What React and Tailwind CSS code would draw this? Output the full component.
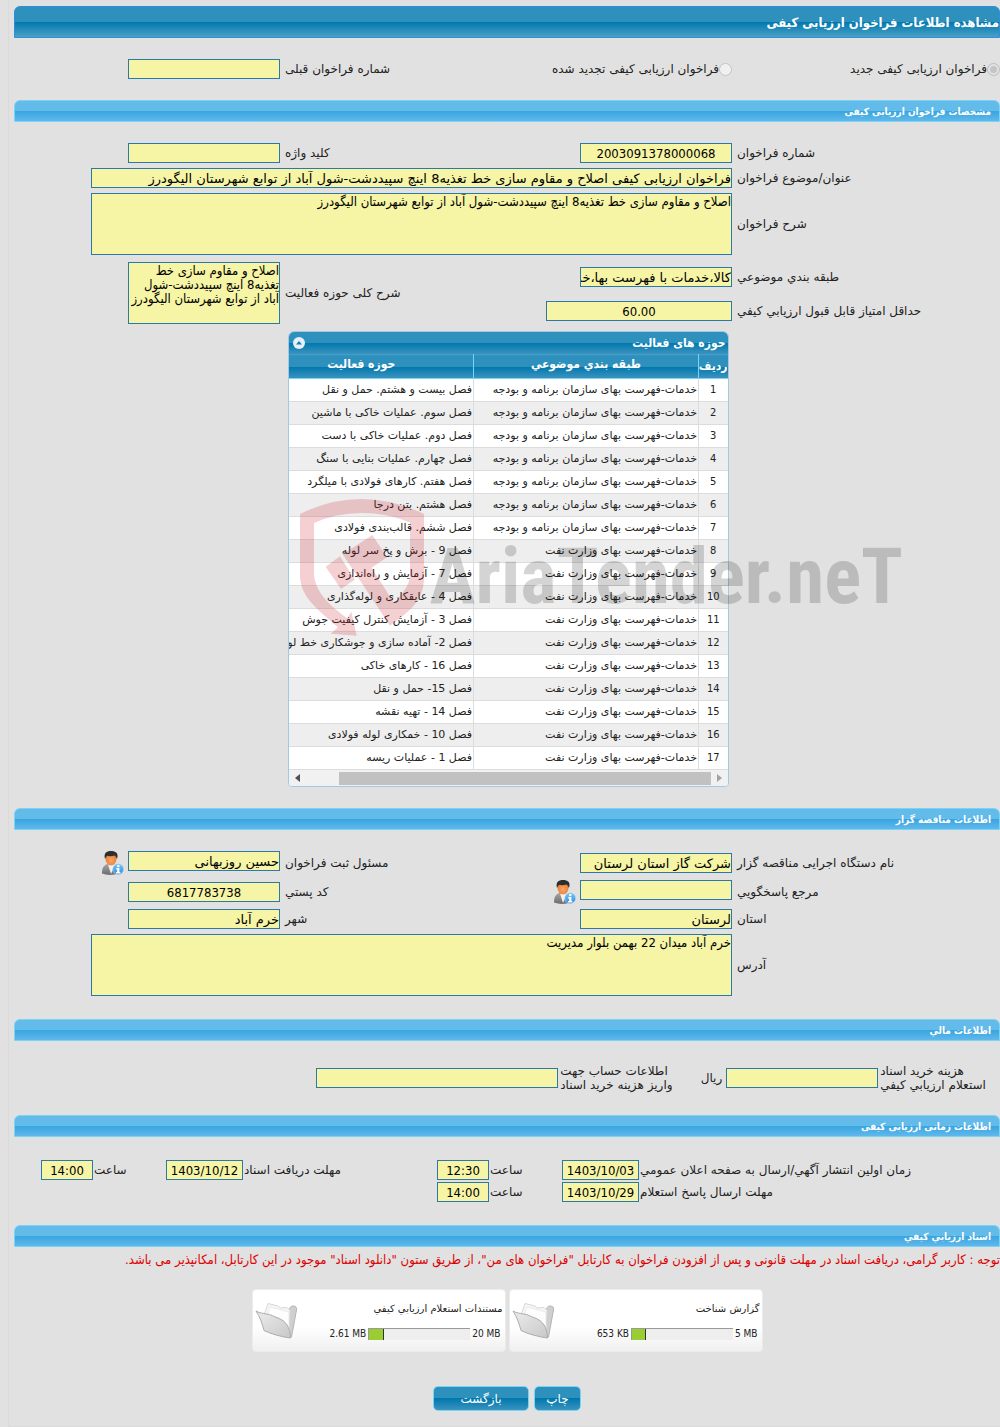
import clsx from 'clsx'

const activities = [
  ['خدمات-فهرست بهای سازمان برنامه و بودجه', 'فصل بیست و هشتم. حمل و نقل'],
  ['خدمات-فهرست بهای سازمان برنامه و بودجه', 'فصل سوم. عملیات خاکی با ماشین'],
  ['خدمات-فهرست بهای سازمان برنامه و بودجه', 'فصل دوم. عملیات خاکی با دست'],
  ['خدمات-فهرست بهای سازمان برنامه و بودجه', 'فصل چهارم. عملیات بنایی با سنگ'],
  ['خدمات-فهرست بهای سازمان برنامه و بودجه', 'فصل هفتم. کارهای فولادی با میلگرد'],
  ['خدمات-فهرست بهای سازمان برنامه و بودجه', 'فصل هشتم. بتن درجا'],
  ['خدمات-فهرست بهای سازمان برنامه و بودجه', 'فصل ششم. قالب‌بندی فولادی'],
  ['خدمات-فهرست بهای وزارت نفت', 'فصل 9 - برش و پخ سر لوله'],
  ['خدمات-فهرست بهای وزارت نفت', 'فصل 7 - آزمایش و راه‌اندازی'],
  ['خدمات-فهرست بهای وزارت نفت', 'فصل 4 - عایقکاری و لوله‌گذاری'],
  ['خدمات-فهرست بهای وزارت نفت', 'فصل 3 - آزمایش کنترل کیفیت جوش'],
  ['خدمات-فهرست بهای وزارت نفت', 'فصل 2- آماده سازی و جوشکاری خط لوله'],
  ['خدمات-فهرست بهای وزارت نفت', 'فصل 16 - کارهای خاکی'],
  ['خدمات-فهرست بهای وزارت نفت', 'فصل 15- حمل و نقل'],
  ['خدمات-فهرست بهای وزارت نفت', 'فصل 14 - تهیه نقشه'],
  ['خدمات-فهرست بهای وزارت نفت', 'فصل 10 - خمکاری لوله فولادی'],
  ['خدمات-فهرست بهای وزارت نفت', 'فصل 1 - عملیات ریسه'],
]

const documents = [
  { title: 'گزارش شناخت', limit: '5 MB', used: '653 KB', percent: 14 },
  { title: 'مستندات استعلام ارزیابي کیفي', limit: '20 MB', used: '2.61 MB', percent: 15 },
]

function SectionBar({ children }) {
  return (
    <h2 className="h-[22px] rounded-t-md border border-[#78d3f6] bg-[linear-gradient(#63bbea_50%,#38a5e1_50%,#60b8ea)] px-2 text-[10px] leading-[22px] font-bold text-white font-['DejaVu_Sans_Condensed']">
      {children}
    </h2>
  )
}

function Field({ id, value = '', numeric, width = 'w-[152px]' }) {
  return (
    <input
      id={id}
      readOnly
      value={value}
      className={clsx(
        'h-5 max-w-full shrink-0 border border-[#2c79a8] bg-[#f6f4a5] text-[13px] leading-[18px] text-black outline-none',
        width,
        numeric ? "text-center font-['DejaVu_Sans_Condensed']" : 'text-right'
      )}
    />
  )
}

function Area({ id, value, width }) {
  return (
    <textarea
      id={id}
      readOnly
      value={value}
      className={clsx("block h-[62px] max-w-full resize-none overflow-hidden border border-[#2c79a8] bg-[#f6f4a5] py-px text-[13px] leading-[14px] text-black outline-none font-['DejaVu_Sans_Condensed']", width)}
    />
  )
}

// label sits against the field, so its text is pushed to the left edge of the cell
function LabelCell({ id, tight, children }) {
  return (
    <div className="flex items-center">
      <label htmlFor={id} className={clsx('w-full text-[12px] leading-[14px]', tight ? 'pl-px' : 'pl-[5px]')} dir="ltr">
        <bdi dir="rtl">{children}</bdi>
      </label>
    </div>
  )
}

function PersonIcon() {
  return (
    <svg width="24" height="24" viewBox="0 0 24 24">
      <defs>
        <linearGradient id="suit" x1="0" y1="0" x2="0" y2="1">
          <stop offset="0" stopColor="#a5a5a5" />
          <stop offset="1" stopColor="#6c6c6c" />
        </linearGradient>
        <radialGradient id="face" cx="0.5" cy="0.6" r="0.6">
          <stop offset="0" stopColor="#ffa463" />
          <stop offset="1" stopColor="#e07a30" />
        </radialGradient>
        <linearGradient id="info" x1="0" y1="0" x2="0" y2="1">
          <stop offset="0" stopColor="#7cc4f6" />
          <stop offset="1" stopColor="#2f8fdf" />
        </linearGradient>
      </defs>
      <path d="M2 22.500c0-5 1-7.500 5-9.500h6c4 1.500 6 4 6 9-5 2.500-12 2.500-17 .5z" fill="url(#suit)" />
      <path d="M8 13.500 11 23l4-9.500z" fill="#f2f2f2" />
      <ellipse cx="11" cy="8" rx="5.500" ry="6.500" fill="url(#face)" />
      <path d="M5 8C3.500 2 6.500 0 11 0s8 2 6 8c-.8-2-1.500-3-2.500-3.500-2.500.8-5.500.8-7 .3C6.300 5.500 5.800 6.500 5 8z" fill="#2e2e2e" />
      <circle cx="18.200" cy="18.200" r="5.500" fill="url(#info)" stroke="#bfe0f8" strokeWidth=".6" />
      <rect x="17.200" y="14" width="2.200" height="2.200" fill="#fff" />
      <path d="M16.300 17h3.100v4h1v1.400h-4.300v-1.400h1.100v-2.600h-.9z" fill="#fff" />
    </svg>
  )
}

function FolderIcon() {
  return (
    <svg width="44" height="40" viewBox="0 0 44 40">
      <defs>
        <linearGradient id="flap" x1="0" y1="0" x2="1" y2="1">
          <stop offset="0" stopColor="#ececec" />
          <stop offset="1" stopColor="#c8c8c8" />
        </linearGradient>
      </defs>
      <path d="M31 12c4-2 3-7 7-7 3 0 4 1.500 3.500 4L36.500 36l-4-3z" fill="#cfcfcf" stroke="#b5b5b5" />
      <path d="M9 14 13 2.500 23 5l2 2 7-.5 3 3-1 22-24-9z" fill="#f6f6f6" stroke="#d8d8d8" />
      <path d="M12 14 15 6l19 5v20z" fill="#fdfdfd" stroke="#e0e0e0" strokeWidth=".6" />
      <path d="M1 10c4 2.500 7 2 10 3 5 0 8 3 12 4 8 3 12 9 12.500 20C27 36 16 33 9 29.500 7 22 5 16 1 10z" fill="url(#flap)" stroke="#acacac" />
    </svg>
  )
}

function Watermark() {
  return (
    <div dir="ltr" className="pointer-events-none absolute top-[168px] left-3 flex items-start gap-0.5">
      <svg className="shrink-0" width="128" height="138" viewBox="30 30 384 414" fill="rgb(200 20 30 / 0.2)">
        <path d="M30 75Q120 30 214 30T402 75V265C402 330 370 360 300 410L158 196 247 138 291 205 245 236 312 342C345 305 360 285 360 255V100Q290 72 214 72T72 102V255C75 310 120 350 172 388L184 368 200 440 122 434 144 415C70 350 30 320 30 255z" />
        <path d="M107 233 150 202 194 272 153 300z" />
      </svg>
      <span className="pt-10 text-[77px] leading-none font-bold text-[rgb(0_0_0/0.17)] font-['Roboto_Condensed']">AriaTender.neT</span>
    </div>
  )
}

function ActivityTable() {
  return (
    <div className="relative mx-auto w-[441px]">
      <div className="overflow-hidden rounded-t-md rounded-b border border-[#a3c8e2] bg-white">
        <div className="flex h-[22px] items-center justify-between bg-[linear-gradient(#2e90bd_50%,#0078ae_50%,#3b93be)] pr-0.5 pl-1 text-white">
          <h3 className="text-[12px] font-bold font-['DejaVu_Sans_Condensed']">حوزه های فعالیت</h3>
          <button type="button" aria-label="بستن جدول" className="flex size-3 items-center justify-center rounded-full bg-[#e3f1fa]">
            <svg width="6" height="4" viewBox="0 0 6 4"><path d="M3 0l3 3.500H0z" fill="#1c79ad" /></svg>
          </button>
        </div>
        <div className="overflow-hidden">
          <table className="w-[478px] table-fixed border-collapse text-[11px] text-[#222]">
            <thead>
              <tr className="h-6 border-t border-b border-t-[#3f9ed0] border-b-[#78d3f6] bg-[linear-gradient(#2e90bd_50%,#0078ae_50%,#3b93be)] align-top text-[12px] leading-[14px] text-white font-['DejaVu_Sans_Condensed']">
                <th className="w-[29px] border-l border-[#78d3f6] p-0 pt-1">ردیف</th>
                <th className="w-[225px] border-l border-[#78d3f6] p-0 pt-0.5">طبقه بندي موضوعي</th>
                <th className="p-0 pt-0.5">حوزه فعالیت</th>
              </tr>
            </thead>
            <tbody>
              {activities.map(([group, name], idx) => (
                <tr key={idx} className={clsx('h-[23px] border-b border-[#dcdcdc] leading-[14px]', idx % 2 === 0 ? 'bg-white' : 'bg-[#eeeeee]')}>
                  <td className="border-l border-[#dcdcdc] p-0 text-center font-['DejaVu_Sans_Condensed']">{idx + 1}</td>
                  <td className="border-l border-[#dcdcdc] p-0 pr-px whitespace-nowrap">{group}</td>
                  <td className="p-0 pr-px whitespace-nowrap">{name}</td>
                </tr>
              ))}
            </tbody>
          </table>
        </div>
        <div className="flex h-4 items-center bg-[#f1f1f1] px-1.5">
          <svg width="5" height="8" viewBox="0 0 5 8"><path d="M0 0l5 4-5 4z" fill="#a3a3a3" /></svg>
          <div className="mr-1.5 h-[13px] w-[372px] bg-[#c1c1c1]" />
          <svg className="mr-auto" width="5" height="8" viewBox="0 0 5 8"><path d="M5 0L0 4l5 4z" fill="#505050" /></svg>
        </div>
      </div>
      <Watermark />
    </div>
  )
}

function DocumentCard({ title, limit, used, percent }) {
  return (
    <div className="flex h-[63px] w-[254px] items-center justify-between rounded-sm border border-[#ececec] bg-linear-to-b from-white from-60% to-[#f0f0f0] px-0.5">
      <div className="flex flex-col gap-3">
        <p className="text-[10px] leading-[14px]">{title}</p>
        <div className="flex items-center gap-0.5 pr-0.5 text-[10px] leading-3 font-['DejaVu_Sans_Condensed']">
          <span dir="ltr">{limit}</span>
          <div dir="ltr" className="h-3 w-[102px] border-t border-l border-[#999] bg-[#eeeeee]">
            <div className="h-full border-r border-[#333] bg-[#9acd32]" style={{ width: `${percent}%` }} />
          </div>
          <span dir="ltr">{used}</span>
        </div>
      </div>
      <FolderIcon />
    </div>
  )
}

function ActionButton({ children, className }) {
  return (
    <button
      type="button"
      className={clsx('h-[25px] rounded-[5px] border border-[#78d3f6] bg-[linear-gradient(#2e90bd_50%,#0078ae_50%,#3b93be)] text-[12px] leading-[14px] text-white', className)}
    >
      {children}
    </button>
  )
}

const fieldGrid = 'grid grid-cols-[268fr_300fr_152fr_266fr] gap-y-[5px]'

export default function App() {
  return (
    <div dir="rtl" lang="fa" className="min-h-screen overflow-x-hidden bg-[#e1e1e1] pl-2 text-[12px] text-[#222] font-['DejaVu_Sans']">
      <main className="border-b border-l border-[#dadada] pt-1.5 pb-[15px] pl-[5px]">
        <h1 className="h-8 rounded-t-md border border-[#2d8fdc] bg-[linear-gradient(#2e90bd_50%,#0078ae_50%,#4ba0c6)] text-[13px] leading-[32px] font-bold text-white font-['DejaVu_Sans_Condensed']">
          مشاهده اطلاعات فراخوان ارزیابی کیفی
        </h1>

        {/* Call type */}
        <div className="grid grid-cols-[268fr_300fr_152fr_266fr] items-center pt-[21px] pb-[21px]">
          <div className="flex items-center">
            <input id="type-new" name="type" type="radio" disabled defaultChecked className="size-[13px] appearance-none rounded-full border border-[#bdbdbd] bg-[#c4c4c4] bg-clip-content p-0.5" />
            <label htmlFor="type-new">فراخوان ارزیابی کیفی جدید</label>
          </div>
          <div className="flex items-center">
            <input id="type-renewed" name="type" type="radio" disabled className="size-[13px] appearance-none rounded-full border border-[#c4c4c4] bg-[#f0f0f0]" />
            <label htmlFor="type-renewed">فراخوان ارزیابی کیفی تجدید شده</label>
          </div>
          <LabelCell id="previous">شماره فراخوان قبلی</LabelCell>
          <Field id="previous" />
        </div>

        <SectionBar>مشخصات فراخوان ارزیابی کیفی</SectionBar>
        <div className="pt-[21px]">
          <div className={fieldGrid}>
            <LabelCell id="number">شماره فراخوان</LabelCell>
            <Field id="number" value="2003091378000068" numeric />
            <LabelCell id="keyword">کلید واژه</LabelCell>
            <Field id="keyword" />

            <LabelCell id="subject">عنوان/موضوع فراخوان</LabelCell>
            <div className="col-span-3 flex">
              <Field id="subject" width="w-[641px]" value="فراخوان ارزیابی کیفی اصلاح و مقاوم سازی خط تغذیه8 اینچ سپیددشت-شول آباد از توابع شهرستان الیگودرز" />
            </div>

            <LabelCell id="description">شرح فراخوان</LabelCell>
            <div className="col-span-3">
              <Area id="description" width="w-[641px]" value="اصلاح و مقاوم سازی خط تغذیه8 اینچ سپیددشت-شول آباد از توابع شهرستان الیگودرز" />
            </div>
          </div>
          <div className="mt-[7px] grid grid-cols-[268fr_300fr_152fr_266fr]">
            <div className="col-span-2 grid grid-cols-[268fr_300fr] content-start gap-y-3.5 pt-[5px]">
              <LabelCell id="category">طبقه بندي موضوعي</LabelCell>
              <Field id="category" value="کالا،خدمات با فهرست بها،خدمات" />
              <LabelCell id="score">حداقل امتیاز قابل قبول ارزیابي کیفي</LabelCell>
              <Field id="score" value="60.00" width="w-[186px]" numeric />
            </div>
            <LabelCell id="scope">شرح کلی حوزه فعالیت</LabelCell>
            <Area id="scope" width="w-[152px]" value="اصلاح و مقاوم سازی خط تغذیه8 اینچ سپیددشت-شول آباد از توابع شهرستان الیگودرز" />
          </div>
        </div>

        <div className="pt-[7px] pb-[21px] pl-0.5">
          <ActivityTable />
        </div>

        <SectionBar>اطلاعات مناقصه گزار</SectionBar>
        <div className={clsx(fieldGrid, 'pt-[21px] pb-[23px]')}>
          <LabelCell id="agency">نام دستگاه اجرایی مناقصه گزار</LabelCell>
          <div className="flex items-center">
            <Field id="agency" value="شرکت گاز استان لرستان" />
          </div>
          <LabelCell id="registrar">مسئول ثبت فراخوان</LabelCell>
          <div className="flex items-start gap-1">
            <Field id="registrar" value="حسین روزبهانی" />
            <button type="button" aria-label="مشخصات مسئول ثبت"><PersonIcon /></button>
          </div>

          <LabelCell id="contact">مرجع پاسخگویي</LabelCell>
          <div className="flex items-start gap-1">
            <Field id="contact" />
            <button type="button" aria-label="مشخصات مرجع پاسخگویی"><PersonIcon /></button>
          </div>
          <LabelCell id="postcode">کد پستي</LabelCell>
          <div className="flex items-center">
            <Field id="postcode" value="6817783738" numeric />
          </div>

          <LabelCell id="province">استان</LabelCell>
          <Field id="province" value="لرستان" />
          <LabelCell id="city">شهر</LabelCell>
          <Field id="city" value="خرم آباد" />

          <LabelCell id="address">آدرس</LabelCell>
          <div className="col-span-3">
            <Area id="address" width="w-[641px]" value="خرم آباد میدان 22 بهمن بلوار مدیریت" />
          </div>
        </div>

        <SectionBar>اطلاعات مالي</SectionBar>
        <div className="grid grid-cols-[122fr_206fr_113fr_545fr] items-center pt-[23px] pb-[23px]">
          <div className="flex justify-end">
            <label htmlFor="fee" className="pl-0.5 text-[12px] leading-[14px] whitespace-nowrap" dir="ltr">
              <bdi dir="rtl">هزینه خرید اسناد</bdi>
              <br />
              <bdi dir="rtl">استعلام ارزیابي کیفي</bdi>
            </label>
          </div>
          <div className="flex items-center gap-1">
            <Field id="fee" />
            <span>ریال</span>
          </div>
          <div className="flex justify-end">
            <label htmlFor="account" className="pl-0.5 text-[12px] leading-[14px] whitespace-nowrap" dir="ltr">
              <bdi dir="rtl">اطلاعات حساب جهت</bdi>
              <br />
              <bdi dir="rtl">واریز هزینه خرید اسناد</bdi>
            </label>
          </div>
          <Field id="account" width="w-[242px]" />
        </div>

        <SectionBar>اطلاعات زمانی ارزیابی کیفی</SectionBar>
        <div className="grid grid-cols-[361fr_114fr_36fr_146fr_100fr_114fr_36fr_79fr] items-center gap-y-0.5 pt-[23px] pb-[23px]">
          <LabelCell id="publish-date" tight>زمان اولین انتشار آگهي/ارسال به صفحه اعلان عمومي</LabelCell>
          <Field id="publish-date" value="1403/10/03" width="w-[77px]" numeric />
          <LabelCell id="publish-time" tight>ساعت</LabelCell>
          <Field id="publish-time" value="12:30" width="w-[52px]" numeric />
          <LabelCell id="receive-date" tight>مهلت دریافت اسناد</LabelCell>
          <Field id="receive-date" value="1403/10/12" width="w-[77px]" numeric />
          <LabelCell id="receive-time" tight>ساعت</LabelCell>
          <Field id="receive-time" value="14:00" width="w-[52px]" numeric />

          <LabelCell id="answer-date" tight>مهلت ارسال پاسخ استعلام</LabelCell>
          <Field id="answer-date" value="1403/10/29" width="w-[77px]" numeric />
          <LabelCell id="answer-time" tight>ساعت</LabelCell>
          <Field id="answer-time" value="14:00" width="w-[52px]" numeric />
        </div>

        <SectionBar>اسناد ارزیابي کیفي</SectionBar>
        <p className="pt-1 text-[13px] leading-[18px] text-[#dd0000] font-['DejaVu_Sans_Condensed']">
          توجه : کاربر گرامی، دریافت اسناد در مهلت قانونی و پس از افزودن فراخوان به کارتابل "فراخوان های من"، از طریق ستون "دانلود اسناد" موجود در این کارتابل، امکانپذیر می باشد.
        </p>

        <div className="flex justify-center gap-[3px] pt-5">
          {documents.map(doc => (
            <DocumentCard key={doc.title} {...doc} />
          ))}
        </div>

        <div className="flex justify-center gap-[5px] pt-[34px]">
          <ActionButton className="w-[47px]">چاپ</ActionButton>
          <ActionButton className="w-24">بازگشت</ActionButton>
        </div>
      </main>
    </div>
  )
}
